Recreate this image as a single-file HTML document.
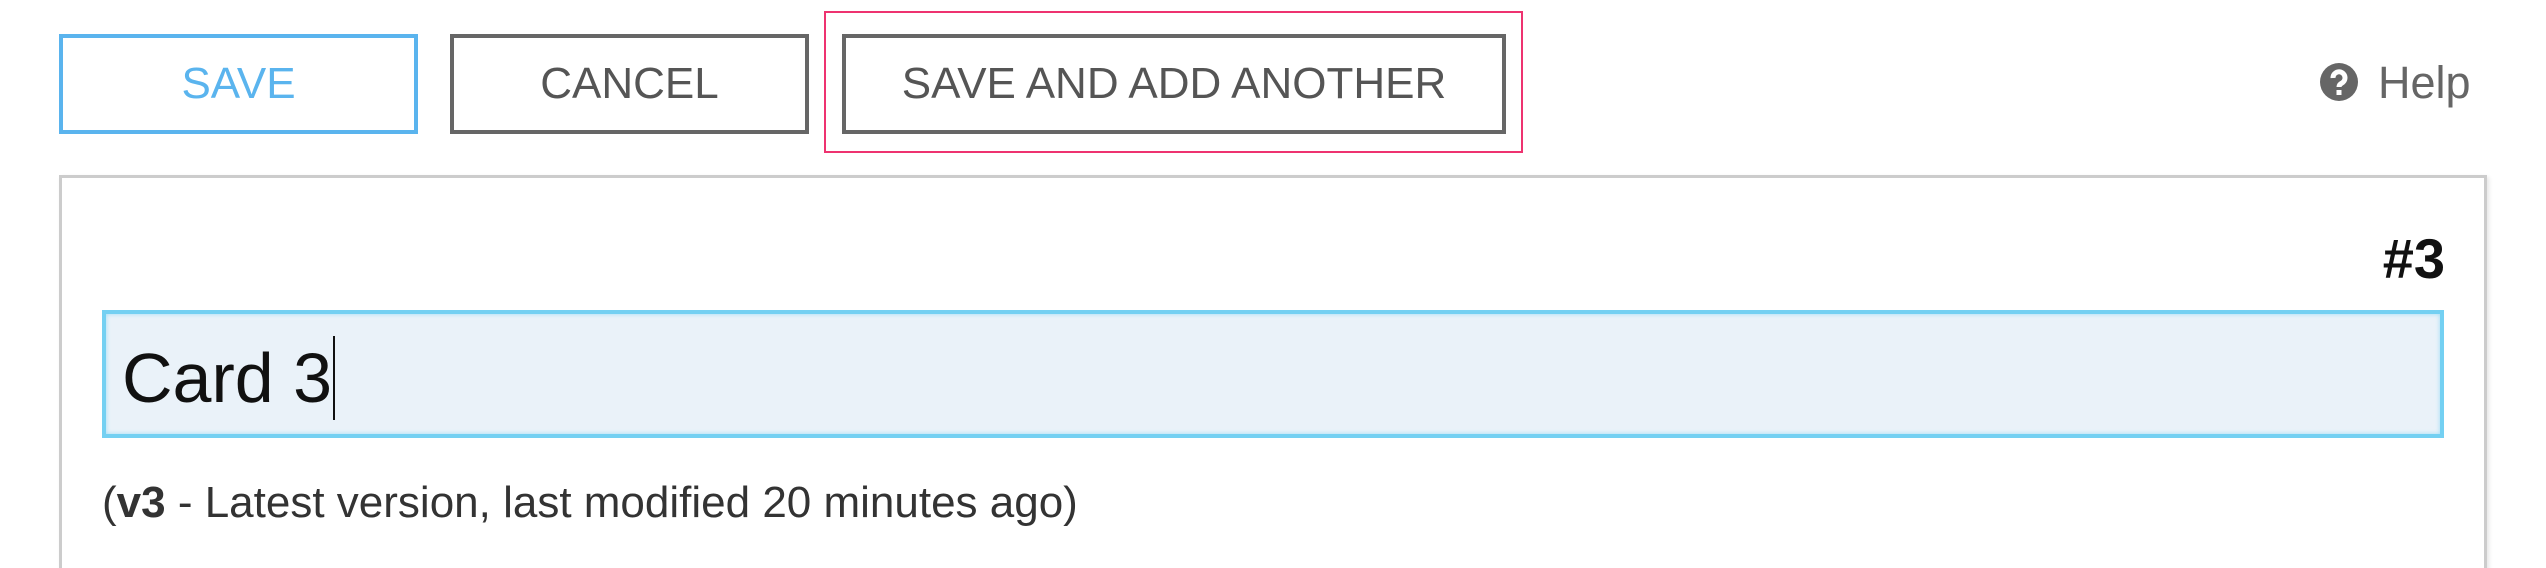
<!DOCTYPE html>
<html style="overflow:hidden;height:568px"><head><style>
body{margin:0;width:2546px;height:568px;background:#fff;position:relative;overflow:hidden;font-family:"Liberation Sans",sans-serif}
.b{position:absolute;top:34px;height:100px;box-sizing:border-box;border:4px solid #666;color:#555;font-size:44px;display:flex;align-items:center;justify-content:center}
</style></head><body>
<div class="b" style="left:59px;width:359px;border-color:#5ab4ee;color:#5ab4ee">SAVE</div>
<div class="b" style="left:450px;width:359px">CANCEL</div>
<div style="position:absolute;left:824px;top:11px;width:699px;height:142px;box-sizing:border-box;border:2px solid #ee3370"></div>
<div class="b" style="left:842px;width:664px">SAVE AND ADD ANOTHER</div>
<svg style="position:absolute;left:2320px;top:63px" width="38" height="38" viewBox="0 0 38 38"><circle cx="19" cy="19" r="19" fill="#666"/><path d="M13 15a6 6 0 1 1 9 5c-2 1-3 2-3 4" stroke="#fff" stroke-width="5" fill="none"/><rect x="16.5" y="27" width="5" height="5" fill="#fff"/></svg>
<div style="position:absolute;left:2378px;top:57px;font-size:45px;color:#666">Help</div>
<div style="position:absolute;left:59px;top:175px;width:2428px;height:420px;box-sizing:border-box;border:3px solid #ccc;box-shadow:2px 2px 4px rgba(0,0,0,.1)"></div>
<div style="position:absolute;right:101px;top:226px;font-size:56px;font-weight:bold;color:#111">#3</div>
<div style="position:absolute;left:102px;top:310px;width:2342px;height:128px;box-sizing:border-box;border:4px solid #74d0f2;background:#eaf2f9;box-shadow:inset 0 0 5px #9edcf5"></div>
<div style="position:absolute;left:122px;top:336px;font-size:70px;color:#111;line-height:84px">Card 3<span style="display:inline-block;width:2px;height:84px;background:#111;vertical-align:top;margin-left:1px"></span></div>
<div style="position:absolute;left:102px;top:478px;font-size:44px;color:#333">(<b>v3</b> - Latest version, last modified 20 minutes ago)</div>
</body></html>
